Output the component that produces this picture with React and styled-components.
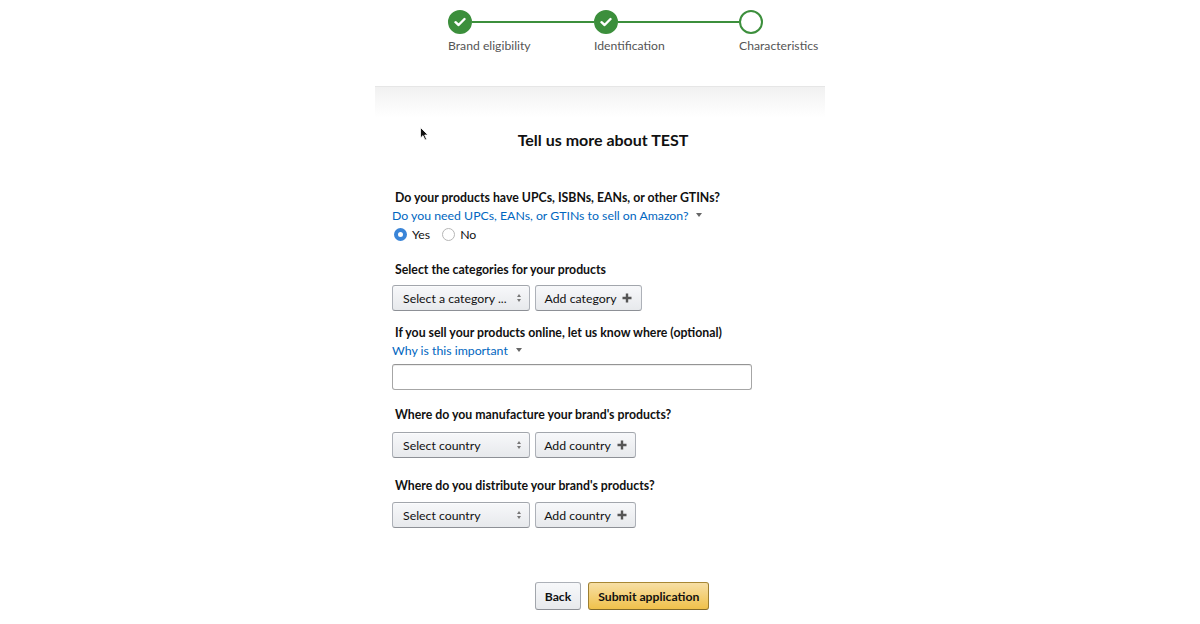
import React from "react";
import styled, { createGlobalStyle } from "styled-components";

const GlobalStyle = createGlobalStyle`
  html, body {
    margin: 0;
    padding: 0;
    background: #fff;
  }
  body {
    font-family: Lato, "Open Sans", "Liberation Sans", Arial, sans-serif;
    color: #111;
  }
`;

const Page = styled.div`
  position: relative;
  width: 1200px;
  height: 624px;
  overflow: hidden;
  background: #fff;
`;

const Column = styled.div`
  width: 450px;
  margin: 0 auto;
`;

const Stepper = styled.div`
  display: flex;
  padding: 10px 0 0 73px;
  height: 86px;
  box-sizing: border-box;
`;

const Step = styled.div`
  display: flex;
  flex-direction: column;
  width: ${({ $width }) => ($width ? `${$width}px` : "auto")};
`;

const Track = styled.div`
  display: flex;
  align-items: center;
  height: 24px;
`;

const Circle = styled.div`
  flex: none;
  width: 24px;
  height: 24px;
  border-radius: 50%;
  box-sizing: border-box;
  display: flex;
  align-items: center;
  justify-content: center;
  background: ${({ $done }) => ($done ? "#3c8f3c" : "#fff")};
  border: 2px solid #3c8f3c;
`;

const Line = styled.div`
  flex: 1;
  height: 2px;
  background: #3c8f3c;
`;

const StepLabel = styled.div`
  margin-top: 5px;
  font-size: 12.2px;
  line-height: 14px;
  color: #555;
  white-space: nowrap;
`;

const Band = styled.div`
  height: 30px;
  border-top: 1px solid #e6e6e6;
  background: linear-gradient(#f1f1f1, #fff);
`;

const Heading = styled.h1`
  margin: 14px 0 0;
  text-align: center;
  font-size: 16px;
  line-height: 18px;
  font-weight: 700;
  color: #111;
  padding-left: 6px;
`;

const Form = styled.div`
  padding: 40px 0 0 17px;
`;

const Field = styled.div`
  margin-top: ${({ $top }) => $top || 0}px;
  display: flex;
  flex-direction: column;
  align-items: flex-start;
`;

const Question = styled.div`
  font-size: 12.3px;
  line-height: 18px;
  font-weight: 700;
  color: #111;
  padding-left: 3px;
  margin-bottom: ${({ $gap }) => $gap || 0}px;
`;

const HelpLink = styled.a`
  display: flex;
  align-items: center;
  gap: 8px;
  font-size: 12.3px;
  line-height: 18px;
  color: #0066c0;
  text-decoration: none;
  margin-bottom: ${({ $gap }) => $gap || 0}px;
`;

const Caret = styled.span`
  width: 0;
  height: 0;
  border-left: 3px solid transparent;
  border-right: 3px solid transparent;
  border-top: 4px solid #666;
  margin-top: -2px;
`;

const RadioRow = styled.div`
  display: flex;
  align-items: center;
  height: 18px;
  padding-left: 2px;
  gap: 12px;
`;

const RadioOption = styled.label`
  display: flex;
  align-items: center;
  gap: 5px;
  font-size: 12.3px;
  color: #111;
`;

const RadioDot = styled.span`
  width: 13px;
  height: 13px;
  border-radius: 50%;
  box-sizing: border-box;
  border: ${({ $checked }) => ($checked ? "4px solid #3a85d8" : "1px solid #b6b6b6")};
  background: #fff;
`;

const Controls = styled.div`
  display: flex;
  gap: 5px;
`;

const SelectBox = styled.div`
  width: 138px;
  height: 26px;
  box-sizing: border-box;
  display: flex;
  align-items: center;
  justify-content: space-between;
  padding: 0 8px 0 10px;
  border: 1px solid #adb1b8;
  border-top-color: #a2a6ac;
  border-bottom-color: #8d9096;
  border-radius: 3px;
  background: linear-gradient(#f7f8fa, #e7e9ec);
  box-shadow: 0 1px 0 rgba(255, 255, 255, 0.6) inset;
  font-size: 12.3px;
  color: #111;
`;

const Arrows = styled.span`
  display: flex;
  flex-direction: column;
  gap: 2px;
  &::before,
  &::after {
    content: "";
    width: 0;
    height: 0;
    border-left: 2px solid transparent;
    border-right: 2px solid transparent;
  }
  &::before {
    border-bottom: 3px solid #777;
  }
  &::after {
    border-top: 3px solid #777;
  }
`;

const AddButton = styled.button`
  width: ${({ $width }) => $width}px;
  height: 26px;
  display: flex;
  align-items: center;
  justify-content: center;
  gap: 6px;
  padding: 0;
  border: 1px solid #adb1b8;
  border-top-color: #a2a6ac;
  border-bottom-color: #8d9096;
  border-radius: 3px;
  background: linear-gradient(#f7f8fa, #e7e9ec);
  font-family: inherit;
  font-size: 12.3px;
  color: #111;
`;

const TextInput = styled.input`
  width: 360px;
  height: 26px;
  box-sizing: border-box;
  border: 1px solid #a6a6a6;
  border-top-color: #949494;
  border-radius: 3px;
  box-shadow: 0 1px 0 rgba(255, 255, 255, 0.5), 0 1px 0 rgba(0, 0, 0, 0.07) inset;
  font-family: inherit;
  outline: none;
`;

const Actions = styled.div`
  display: flex;
  justify-content: center;
  gap: 7px;
  margin-top: 54px;
  padding-left: 44px;
`;

const ActionButton = styled.button`
  height: 28px;
  padding: 0 9px;
  border-radius: 3px;
  border: 1px solid;
  border-color: ${({ $primary }) =>
    $primary ? "#a88734 #9c7e31 #846a29" : "#adb1b8 #a2a6ac #8d9096"};
  background: ${({ $primary }) =>
    $primary ? "linear-gradient(#f7dfa5, #f0c14b)" : "linear-gradient(#f7f8fa, #e7e9ec)"};
  font-family: inherit;
  font-size: 12.2px;
  font-weight: 700;
  color: #111;
`;

const Cursor = styled.svg`
  position: absolute;
  left: 420px;
  top: 127px;
`;

const Check = () => (
  <svg width="12" height="10" viewBox="0 0 12 10">
    <path d="M1.5 5.2 L4.6 8 L10.5 2" fill="none" stroke="#fff" strokeWidth="2.4" strokeLinecap="round" strokeLinejoin="round" />
  </svg>
);

const Plus = () => (
  <svg width="10" height="10" viewBox="0 0 10 10">
    <path d="M5 0.5 V9.5 M0.5 5 H9.5" stroke="#555" strokeWidth="2.4" />
  </svg>
);

const steps = [
  { label: "Brand eligibility", done: true, width: 146 },
  { label: "Identification", done: true, width: 145 },
  { label: "Characteristics", done: false },
];

const Select = ({ text }) => (
  <SelectBox>
    <span>{text}</span>
    <Arrows />
  </SelectBox>
);

const App = () => (
  <Page>
    <GlobalStyle />
    <Column>
      <Stepper>
        {steps.map((s, i) => (
          <Step key={s.label} $width={s.width}>
            <Track>
              <Circle $done={s.done}>{s.done && <Check />}</Circle>
              {i < steps.length - 1 && <Line />}
            </Track>
            <StepLabel>{s.label}</StepLabel>
          </Step>
        ))}
      </Stepper>
      <Band />
      <Heading>Tell us more about TEST</Heading>
      <Form>
        <Field>
          <Question>Do your products have UPCs, ISBNs, EANs, or other GTINs?</Question>
          <HelpLink href="#">
            Do you need UPCs, EANs, or GTINs to sell on Amazon? <Caret />
          </HelpLink>
          <RadioRow>
            <RadioOption>
              <RadioDot $checked /> Yes
            </RadioOption>
            <RadioOption>
              <RadioDot /> No
            </RadioOption>
          </RadioRow>
        </Field>
        <Field $top={18}>
          <Question $gap={6}>Select the categories for your products</Question>
          <Controls>
            <Select text="Select a category ..." />
            <AddButton $width={107}>
              Add category <Plus />
            </AddButton>
          </Controls>
        </Field>
        <Field $top={13}>
          <Question>If you sell your products online, let us know where (optional)</Question>
          <HelpLink href="#" $gap={4}>
            Why is this important <Caret />
          </HelpLink>
          <TextInput type="text" />
        </Field>
        <Field $top={16}>
          <Question $gap={8}>Where do you manufacture your brand's products?</Question>
          <Controls>
            <Select text="Select country" />
            <AddButton $width={101}>
              Add country <Plus />
            </AddButton>
          </Controls>
        </Field>
        <Field $top={19}>
          <Question $gap={7}>Where do you distribute your brand's products?</Question>
          <Controls>
            <Select text="Select country" />
            <AddButton $width={101}>
              Add country <Plus />
            </AddButton>
          </Controls>
        </Field>
      </Form>
      <Actions>
        <ActionButton>Back</ActionButton>
        <ActionButton $primary>Submit application</ActionButton>
      </Actions>
    </Column>
    <Cursor width="10" height="15" viewBox="0 0 10 15">
      <path d="M0.5 0.5 L0.5 11 L3 8.6 L5 13 L6.6 12.3 L4.7 8 L8 8 Z" fill="#111" stroke="#fff" strokeWidth="0.8" />
    </Cursor>
  </Page>
);

export default App;
